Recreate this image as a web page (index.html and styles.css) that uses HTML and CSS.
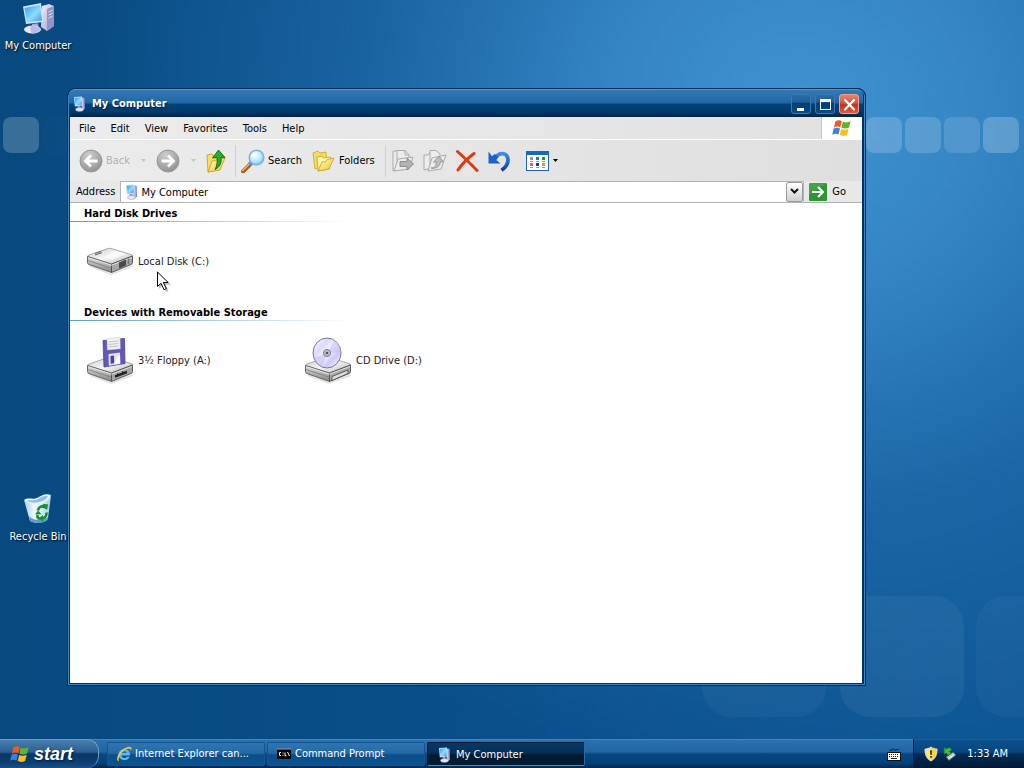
FILE: index.html
```html
<!DOCTYPE html>
<html lang="en">
<head>
  <meta charset="UTF-8" />
  <meta name="viewport" content="width=device-width, initial-scale=1.0"/>
  <title>My Computer</title>
  <link rel="stylesheet" href="styles.css">
</head>
<body>
  <!-- Shared icons -->
  <svg class="sprite" aria-hidden="true">
    <defs>
      <linearGradient id="gScreen" x1="0" y1="0" x2="1" y2="1">
        <stop offset="0" stop-color="#2f9df0"/><stop offset=".55" stop-color="#8fdcfb"/><stop offset="1" stop-color="#3d95e6"/>
      </linearGradient>
      <linearGradient id="gCase" x1="0" y1="0" x2="1" y2="1">
        <stop offset="0" stop-color="#f2f3fb"/><stop offset="1" stop-color="#9a9cc8"/>
      </linearGradient>
      <linearGradient id="gMetal" x1="0" y1="0" x2="1" y2="1">
        <stop offset="0" stop-color="#c9c9c9"/><stop offset=".5" stop-color="#f6f6f6"/><stop offset="1" stop-color="#b5b5b5"/>
      </linearGradient>
      <linearGradient id="gSide" x1="0" y1="0" x2="0" y2="1">
        <stop offset="0" stop-color="#dcdcdc"/><stop offset="1" stop-color="#868686"/>
      </linearGradient>
      <linearGradient id="gFolder" x1="0" y1="0" x2="1" y2="1">
        <stop offset="0" stop-color="#fffbb8"/><stop offset="1" stop-color="#f0c534"/>
      </linearGradient>
      <radialGradient id="gNav" cx=".4" cy=".25" r=".8">
        <stop offset="0" stop-color="#cfcfcf"/><stop offset=".6" stop-color="#a9a9a9"/><stop offset="1" stop-color="#8e8e8e"/>
      </radialGradient>
      <radialGradient id="gLens" cx=".4" cy=".35" r=".7">
        <stop offset="0" stop-color="#ffffff"/><stop offset=".6" stop-color="#b7e8fc"/><stop offset="1" stop-color="#6fc0ee"/>
      </radialGradient>
      <linearGradient id="gDisc" x1="0" y1="0" x2="1" y2="1">
        <stop offset="0" stop-color="#ffffff"/><stop offset=".3" stop-color="#dcd9fa"/><stop offset=".5" stop-color="#f8f8ff"/><stop offset=".7" stop-color="#cdc8f6"/><stop offset="1" stop-color="#ffffff"/>
      </linearGradient>
      <linearGradient id="gUndo" x1="0" y1="0" x2="0" y2="1">
        <stop offset="0" stop-color="#3a8fe8"/><stop offset="1" stop-color="#0c3fae"/>
      </linearGradient>
      <linearGradient id="gBin" x1="0" y1="0" x2="1" y2="0">
        <stop offset="0" stop-color="#9fd0f4"/><stop offset=".4" stop-color="#f2fbff"/><stop offset="1" stop-color="#a6d0f0"/>
      </linearGradient>
    </defs>

    <symbol id="flag" viewBox="0 0 20 18">
      <path d="M3.400 2.200C5.600.8 7.800.9 9.800 2L8.300 8.300C6.300 7.300 4.200 7.300 1.900 8.500z" fill="#ee5a24"/>
      <path d="M10.800 2.500c2.400 1.200 4.700 1.200 7.800-.2L17 8.500c-2.500 1.300-5 1.300-7.500.3z" fill="#62b42c"/>
      <path d="M1.700 9.600c2.300-1.200 4.300-1.200 6.300-.2L6.500 15.600C4.400 14.500 2.400 14.600.2 15.800z" fill="#3f7fe0"/>
      <path d="M9.200 9.900c2.500 1.100 5 1 7.500-.2l-1.600 6.200c-2.600 1.400-5 1.300-7.400.2z" fill="#fbc01d"/>
    </symbol>

    <symbol id="pc" viewBox="0 0 16 16">
      <path d="M9.500 1.500l3.200.3.300 11L9.500 15z" fill="#7f86c8"/>
      <path d="M10 2l1.500.2.200 11L10 14z" fill="#bcc0e8"/>
      <path d="M2 1L10 .5l.6 9-7.800 1z" fill="#c9e2fa"/>
      <path d="M2.700 1.700l6.700-.4.500 7.400-6.500.8z" fill="url(#gScreen)"/>
      <path d="M5.500 10l3-.3.300 2.500-3 .3z" fill="#8b99d0"/>
      <ellipse cx="7.500" cy="13.500" rx="4" ry="1.900" fill="#e6e6fa" stroke="#8a8cc4" stroke-width=".5"/>
    </symbol>

    <symbol id="drive" viewBox="0 0 48 28">
      <path d="M4 17l21 9.500 22-8.500v2L25 28 4 20z" fill="#000" opacity=".12"/>
      <path d="M1.500 9.500Q1.500 8.500 3 8L22 1.500q1.500-.5 3 0L45 7.500q1.500.6 1.500 1.500L25.500 17z" fill="url(#gMetal)" stroke="#888" stroke-width=".7"/>
      <path d="M1.500 9.500l24 7.500v8.500L3 17.500q-1.500-.6-1.500-2z" fill="url(#gSide)" stroke="#5a5a5a" stroke-width=".9"/>
      <path d="M25.500 17l21-8v6.500q0 1.500-1.500 2L25.500 25.500z" fill="#a6a6a6" stroke="#4c4c4c" stroke-width=".9"/>
      <path d="M2.500 10.800l23 7.400 20.500-7.700" fill="none" stroke="#eee" stroke-width=".8"/>
      <path d="M2 13.500l23.500 7.800" fill="none" stroke="#777" stroke-width=".7"/>
    </symbol>
  </svg>

  <main class="desktop">
    <svg class="wallpaper" viewBox="0 0 1024 739" preserveAspectRatio="xMaxYMin slice" aria-hidden="true">
      <g fill="#fff">
        <rect x="3" y="117" width="36" height="36" rx="8" opacity=".2"/>
        <rect x="42" y="117" width="36" height="36" rx="8" opacity=".01"/>
        <rect x="866" y="117" width="36" height="36" rx="8" opacity=".19"/>
        <rect x="905" y="117" width="36" height="36" rx="8" opacity=".17"/>
        <rect x="944" y="117" width="36" height="36" rx="8" opacity=".13"/>
        <rect x="983" y="117" width="36" height="36" rx="8" opacity=".21"/>
        <rect x="702" y="596" width="124" height="121" rx="30" opacity=".04"/>
        <rect x="840" y="596" width="124" height="121" rx="30" opacity=".05"/>
        <rect x="976" y="596" width="124" height="121" rx="30" opacity=".03"/>
      </g>
    </svg>

    <a class="shortcut shortcut-computer" href="#computer">
      <svg width="34" height="34" viewBox="0 0 34 34">
        <path d="M21 4l7-2 5 2v20l-7 5-6-4z" fill="url(#gCase)"/>
        <path d="M26 7l7-3v20l-7 5z" fill="#9294c6"/>
        <path d="M27.500 10l4-1.800M27.500 13l4-1.800M27.500 16l4-1.800" stroke="#dfe0f8" stroke-width="1"/>
        <path d="M2 4.500L20 1l2.500 19L5 22z" fill="#cfe3f8"/>
        <path d="M3.500 6L19 3l2 15.500L6 20.300z" fill="url(#gScreen)"/>
        <path d="M11 22l6-.7 1 6-6 .7z" fill="#a7a9d6"/>
        <ellipse cx="11.500" cy="27.500" rx="8.500" ry="4" fill="#e6e7fa"/>
        <path d="M9 24.500c4-1.500 9 0 10.500 2.500-1 3-5 4.500-9 4.500" fill="#b9bbe2"/>
      </svg>
      <span>My Computer</span>
    </a>

    <a class="shortcut shortcut-bin" href="#bin">
      <svg width="34" height="34" viewBox="0 0 34 34">
        <path d="M3 7l9 4 7-1 11-7-3 22c-2 5-13 6-18 3z" fill="url(#gBin)"/>
        <path d="M3 7c4-3 9 0 13-2s8-5 14-3c-2 5-6 8-12 9-5 1-11 0-15-4z" fill="#e9f6ff"/>
        <path d="M6 8c4-1.500 8 0 11-2s6-3.500 10-2.700C25 7 22 8.500 17.500 9.300 13 10 9 9.800 6 8z" fill="#8fc0e6"/>
        <path d="M8 23c4 5 14 5 19.300 1l-.5 2.500c-3 4-13 4.500-17.800 1.500z" fill="#5f9ad4"/>
        <g fill="none" stroke="#179027" stroke-width="2.600">
          <path d="M17 17.500c.5-3.500 3.500-5 6.500-3.500"/>
          <path d="M25.500 19.500c.3 3-1.500 5.500-4.500 6"/>
          <path d="M19 26c-2-.6-3-2-2.500-4"/>
        </g>
        <path d="M22 11l5 .3-.8 5.500-5-2.500zM22 22v6.500l-4.500-3zM14 21.500l3-4 3.500 3.700z" fill="#179027"/>
      </svg>
      <span>Recycle Bin</span>
    </a>

    <section class="window" id="computer">
      <header class="titlebar">
        <svg width="16" height="16"><use href="#pc"/></svg>
        <h1>My Computer</h1>
        <div class="window-buttons">
          <button class="win-btn" aria-label="Minimize"><svg width="17" height="17"><path d="M4 12h7v3H4z" fill="#fff"/></svg></button>
          <button class="win-btn" aria-label="Maximize"><svg width="17" height="17"><path d="M3 3h11v11H3zM4 6v7h9V6z" fill="#fff" fill-rule="evenodd"/></svg></button>
          <button class="win-btn close" aria-label="Close"><svg width="17" height="17"><path d="M4 4l9 9.500M13 4l-9 9.500" stroke="#fff" stroke-width="2.200" stroke-linecap="round"/></svg></button>
        </div>
      </header>

      <nav class="menubar">
        <button>File</button>
        <button>Edit</button>
        <button>View</button>
        <button>Favorites</button>
        <button>Tools</button>
        <button>Help</button>
        <div class="throbber"><svg width="20" height="18"><use href="#flag"/></svg></div>
      </nav>

      <div class="toolbar">
        <button class="tool back" disabled>
          <svg width="24" height="24" viewBox="0 0 24 24"><circle cx="12" cy="12" r="11" fill="url(#gNav)" stroke="#999"/><path d="M18.500 12H7M12 6.500L6.500 12l5.500 5.500" fill="none" stroke="#fff" stroke-width="2.800"/></svg>
          <span>Back</span>
        </button>
        <button class="drop" disabled aria-label="Back history"><svg width="5" height="3"><path d="M0 0h5L2.500 3z" fill="#c4c4c4"/></svg></button>
        <button class="tool" disabled aria-label="Forward">
          <svg width="24" height="24" viewBox="0 0 24 24"><circle cx="12" cy="12" r="11" fill="url(#gNav)" stroke="#999"/><path d="M5.500 12H17M12 6.500l5.500 5.500-5.500 5.500" fill="none" stroke="#fff" stroke-width="2.800"/></svg>
        </button>
        <button class="drop" disabled aria-label="Forward history"><svg width="5" height="3"><path d="M0 0h5L2.500 3z" fill="#c4c4c4"/></svg></button>
        <button class="tool" aria-label="Up">
          <svg width="24" height="24" viewBox="0 0 24 24">
            <path d="M1 6l5-1 1.500 2 6-1L12 21 2 23z" fill="#f8df68" stroke="#c39a1d" stroke-width=".8"/>
            <path d="M2 23l4-11 13-3-5 12z" fill="url(#gFolder)" stroke="#c39a1d" stroke-width=".8"/>
            <path d="M12.500 1L19 8.500l-4-.3c.8 5.500-.8 9.500-6 12.300 2-3.500 2.500-7 2-12L6.500 9z" fill="#27ad2c" stroke="#0b6a14" stroke-width=".9"/>
          </svg>
        </button>
        <span class="separator"></span>
        <button class="tool search">
          <svg width="24" height="24" viewBox="0 0 24 24">
            <path d="M2 22.500l8.500-8.500" stroke="#a85d1c" stroke-width="4" stroke-linecap="round"/>
            <path d="M1.800 21.500l7.500-7.500" stroke="#f5b26a" stroke-width="1.600" stroke-linecap="round"/>
            <path d="M8.500 15.500l2.500-2.500" stroke="#6d8fc4" stroke-width="4"/>
            <circle cx="15.500" cy="8.500" r="7.300" fill="url(#gLens)" stroke="#7fb0e0" stroke-width="1.500"/>
            <path d="M11.500 8c.4-2.500 2-3.600 4-3.800" stroke="#fff" stroke-width="1.500" fill="none"/>
          </svg>
          <span>Search</span>
        </button>
        <button class="tool folders">
          <svg width="24" height="24" viewBox="0 0 24 24">
            <path d="M1 4l5-2 2 2 6-1 1 12-12 5z" fill="#f6db62" stroke="#c9a227" stroke-width=".8"/>
            <path d="M5 8l5-1 1.500 2 7-1-1 12L6 22z" fill="#fff6a8" stroke="#c9a227" stroke-width=".8"/>
            <path d="M6 22l4-9 4-.5 1-2L22 9l-5 11z" fill="url(#gFolder)" stroke="#c9a227" stroke-width=".8"/>
          </svg>
          <span>Folders</span>
        </button>
        <span class="separator"></span>
        <button class="tool" disabled aria-label="Move to">
          <svg width="24" height="24" viewBox="0 0 24 24" fill="#ececec" stroke="#ababab">
            <path d="M2 2h4l1.500 2H10v16l-8 2z"/>
            <path d="M6 4V1.500h8L18 6v13l-12 1z"/>
            <path d="M14 1.500V6h4" fill="none"/>
            <path d="M3 22l4-12 15-2-4 12z"/>
            <path d="M9 12.500h7V9l6.500 6-6.500 6v-3.500H9z" fill="#b2b2b2" stroke="#8d8d8d"/>
          </svg>
        </button>
        <button class="tool" disabled aria-label="Copy to">
          <svg width="24" height="24" viewBox="0 0 24 24" fill="#ececec" stroke="#ababab">
            <path d="M1 6h4l1.500-2H9v15l-8 2z"/>
            <path d="M7 4V1.500h6L17 5v12l-10 3z"/>
            <path d="M5 22L9 9l14-3-5 14z"/>
            <path d="M8 19c4 0 5-2 5.500-6l-3 .2 5.500-6 4.500 5.600-3-.1C17 17 14 20 8 19z" fill="#bdbdbd" stroke="#999"/>
          </svg>
        </button>
        <button class="tool" aria-label="Delete">
          <svg width="24" height="24" viewBox="0 0 24 24"><path d="M2.500 2.500C8 7.500 15 14 22 21.500M19 4.500C13 9 7 15 3 21" fill="none" stroke="#de3a12" stroke-width="3" stroke-linecap="round"/></svg>
        </button>
        <button class="tool" aria-label="Undo">
          <svg width="24" height="24" viewBox="0 0 24 24"><path d="M7.500 9.500C12 2.500 20.500 3 21 10.500c.2 4.500-2.500 8-6.500 10.700" fill="none" stroke="url(#gUndo)" stroke-width="3.800"/><path d="M1.500 2.500v12h12l-4.200-3.500 2.200-3-4-3-2.500 2.300z" fill="#1d62c8"/></svg>
        </button>
        <button class="tool views" aria-label="Views">
          <svg width="24" height="24" viewBox="0 0 24 24">
            <rect x=".5" y="3" width="22" height="18.500" fill="#fff" stroke="#2464b4"/><path d="M0 2h23v4H0z" fill="#1769c0"/>
            <path d="M4 8h3v3H4z" fill="#9a8fae"/><path d="M10 8h3v3h-3z" fill="#426ea8"/><path d="M16 8h3v3h-3z" fill="#189a38"/>
            <path d="M4 14h3v3H4z" fill="#df6371"/><path d="M10 14h3v3h-3z" fill="#183b8c"/><path d="M16 14h3v3h-3z" fill="#d99b23"/>
            <path d="M4 12.500h3M10 12.500h3M16 12.500h3M4 18.500h3M10 18.500h3M16 18.500h3" stroke="#999"/>
          </svg>
          <svg width="5" height="3"><path d="M0 0h5L2.500 3z"/></svg>
        </button>
      </div>

      <form class="addressbar" onsubmit="return false">
        <label for="address">Address</label>
        <div class="address-field">
          <svg width="16" height="16"><use href="#pc"/></svg>
          <input id="address" type="text" value="My Computer">
          <button type="button" class="address-drop" aria-label="Show addresses"><svg width="9" height="7"><path d="M1 1l3.500 3.500L8 1" fill="none" stroke="#111" stroke-width="2"/></svg></button>
        </div>
        <button class="go">
          <svg width="18" height="18" viewBox="0 0 18 18"><rect width="18" height="18" rx="1" fill="#2d9535"/><path d="M0 0h18L0 12z" fill="#fff" opacity=".12"/><path d="M3 9h10M9 4l5 5-5 5" fill="none" stroke="#fff" stroke-width="2"/></svg>
          <span>Go</span>
        </button>
      </form>

      <div class="content">
        <section class="group">
          <h2>Hard Disk Drives</h2>
          <div class="items">
            <a class="item" href="#c">
              <svg width="48" height="48" viewBox="0 0 48 48">
                <use href="#drive" y="10" width="48" height="28"/>
                <path d="M9 16.500l6-2M9 18l7-2.300" stroke="#666" stroke-width="1"/>
                <path d="M19 20l9-6.500 12 3.500-14 6z" fill="#fff" opacity=".6"/>
                <path d="M33 25.500l7-3v6l-7 3z" fill="#4a4a4a"/>
                <path d="M42.500 21.500v5.500" stroke="#777" stroke-width="1.500"/>
              </svg>
              <span>Local Disk (C:)</span>
            </a>
          </div>
        </section>
        <section class="group">
          <h2>Devices with Removable Storage</h2>
          <div class="items">
            <a class="item" href="#a">
              <svg width="48" height="48" viewBox="0 0 48 48">
                <use href="#drive" y="20" width="48" height="28"/>
                <path d="M29 40l12-4.500M31 38l3 1.500M36 35.500l3 2M29 41l12-4.500" stroke="#222" stroke-width="1.500"/>
                <path d="M17 4.500l21.500-2 .5 25L18 31z" fill="#6259b4" stroke="#4a4296" stroke-width=".8"/>
                <path d="M21 2.500l13-1.200.3 11.500L21.400 14z" fill="#f3f3f3" stroke="#c9c9d6" stroke-width=".5"/>
                <path d="M22.500 6l10-1M22.500 8.500l10-1M22.500 11l10-1" stroke="#b5b5b5" stroke-width=".8"/>
                <path d="M22.500 18l11.500-1.500.3 11.500-11.500 1.800z" fill="#e2e2f4"/>
                <path d="M24.500 20l3.500-.5.200 7.700-3.500.5z" fill="#4b4299"/>
                <path d="M28 28l5-9 1-.2.200 8.500z" fill="#fff"/>
              </svg>
              <span>3½ Floppy (A:)</span>
            </a>
            <a class="item" href="#d">
              <svg width="48" height="48" viewBox="0 0 48 48">
                <use href="#drive" y="20" width="48" height="28"/>
                <path d="M28 40.500l16-6.500v3.500L28 44.500z" fill="#ddd" stroke="#444" stroke-width=".8"/>
                <ellipse cx="23" cy="17" rx="14" ry="15" fill="url(#gDisc)" stroke="#777694" stroke-width="1"/>
                <path d="M23 17L30 4.500c5 2.500 7 7 6.500 12z" fill="#c5bff7" opacity=".6"/>
                <path d="M23 17L10 22c2 5 4.500 7.500 8 8.500z" fill="#b7b3ea" opacity=".5"/>
                <circle cx="23" cy="17" r="3.500" fill="#c4c4d0" stroke="#77778c"/>
                <circle cx="23" cy="17" r="1.300" fill="#555"/>
              </svg>
              <span>CD Drive (D:)</span>
            </a>
          </div>
        </section>
      </div>
    </section>

    <svg class="cursor" width="16" height="22" viewBox="0 0 16 22" aria-hidden="true">
      <path d="M3 3v15l4-3.500 3 6.500 2.500-1-2.800-6.300H15z" fill="#000" opacity=".25"/>
      <path d="M1.500 1v14.500l3.500-3.200 3 6.400 2.300-1-2.900-6.200h4.800z" fill="#fff" stroke="#000"/>
    </svg>
  </main>

  <footer class="taskbar">
    <button class="start">
      <svg width="20" height="18"><use href="#flag"/></svg>
      <span>start</span>
    </button>
    <div class="tasks">
      <button class="task">
        <svg width="16" height="16" viewBox="0 0 16 16">
          <path d="M14 9.500H5.500c.2 2.800 4.200 3.300 5.400 1.200h2.800C12 15.800 2.800 15.300 2.600 8.500 2.500 1.500 14.500 1 14 9.500zM5.600 7h5.300C10.500 4.200 6 4.200 5.600 7z" fill="#59b8f5" fill-rule="evenodd"/>
          <path d="M3 15.200C-2.500 14 5 1.200 13.500.8c2.800.1 2.200 2.500 1.200 4C15 2.500 13.500 1.800 11 3 6 5 1.500 11.500 3 15.200z" fill="#f6c83b"/>
        </svg>
        <span>Internet Explorer can...</span>
      </button>
      <button class="task">
        <svg width="16" height="16" viewBox="0 0 16 16">
          <rect x="1" y="3" width="14" height="10" fill="#050505"/><path d="M1 3h14" stroke="#8d9ab0"/>
          <path d="M5 6.500H3.500v3H5M7 6.500v1M7 8.800v1M9 6.500v3.300h1.500M11.500 6l2 4" stroke="#fff" fill="none"/>
        </svg>
        <span>Command Prompt</span>
      </button>
      <button class="task active">
        <svg width="16" height="16"><use href="#pc"/></svg>
        <span>My Computer</span>
      </button>
    </div>
    <button class="keyboard" aria-label="Language bar">
      <svg width="14" height="14" viewBox="0 0 14 14">
        <path d="M3 4c0-3 2 0 3-1.500S8 4 9 3s2 0 3-1" fill="none" stroke="#06192f"/>
        <rect x=".5" y="5.500" width="13" height="8" fill="#fff" stroke="#111"/>
        <path d="M2 7.500h10M2 9.500h10" stroke="#222" stroke-dasharray="1 1"/><path d="M4 11.500h6" stroke="#222"/>
      </svg>
    </button>
    <div class="tray">
      <svg width="14" height="16" viewBox="0 0 14 16">
        <path d="M7 1c2 1.500 4 2 6 2 0 6-1.500 9.500-6 12-4.500-2.500-6-6-6-12 2 0 4-.5 6-2z" fill="#fbd43a" stroke="#d9e3ee"/>
        <path d="M7 1.500V14.500c-4-2.500-5.300-6-5.400-11z" fill="#fff" opacity=".35"/>
        <path d="M6 4.500h2L7.600 9H6.400zM6.200 10h1.600v1.700H6.200z" fill="#222"/>
      </svg>
      <svg width="14" height="16" viewBox="0 0 14 16">
        <path d="M3 11l7-5 3 3-7 5.500z" fill="#bcc4c9" stroke="#4b555b" stroke-width=".8"/>
        <path d="M5.500 12.500l5-3.500" stroke="#fff"/>
        <path d="M1 1l2 2 4-1.500L8.500 4l-2 1.500 1.500 2-3 2L3.500 7 1.300 8z" fill="#3fbf45" stroke="#167a22" stroke-width=".7"/>
      </svg>
      <time>1:33 AM</time>
    </div>
  </footer>
</body>
</html>
```
FILE: styles.css
```css
* {
  margin: 0;
  padding: 0;
  box-sizing: border-box;
}

body {
  font-family: "DejaVu Sans Condensed", "DejaVu Sans", Tahoma, sans-serif;
  font-size: 11px;
  line-height: 14px;
  color: #000;
  height: 100vh;
  display: flex;
  flex-direction: column;
  overflow: hidden;
}

svg {
  display: block;
  flex-shrink: 0;
}

button {
  font: inherit;
  color: inherit;
  background: none;
  border: none;
  display: flex;
  align-items: center;
}

a {
  color: inherit;
  text-decoration: none;
}

.sprite {
  position: absolute;
  width: 0;
  height: 0;
}

/* Desktop */
.desktop {
  flex: 1;
  position: relative;
  overflow: hidden;
  background:
    radial-gradient(ellipse 720px 680px at 800px 110px, #3f92cf 0%, rgba(58, 139, 203, 0.9) 25%, rgba(36, 114, 178, 0.6) 60%, rgba(12, 82, 142, 0) 100%),
    linear-gradient(90deg, #084a80 0%, #0a4f8a 50%, #0c5594 100%);
}

.wallpaper {
  width: 100%;
  height: 100%;
}

.shortcut {
  position: absolute;
  left: 0;
  width: 76px;
  display: flex;
  flex-direction: column;
  align-items: center;
  gap: 3px;
  color: #fff;
  white-space: nowrap;
  text-shadow: 1px 1px 2px #000;
}

.shortcut-computer {
  top: 2px;
}

.shortcut-bin {
  top: 493px;
}

/* Window */
.window {
  position: absolute;
  top: 88px;
  right: 158px;
  bottom: 53px;
  left: 67px;
  display: flex;
  flex-direction: column;
  border: 1px solid #062d57;
  border-radius: 8px 8px 0 0;
  padding: 0 2px 1px 1px;
  background: #04315f;
  box-shadow: inset 0 0 0 1px #4386bd;
}

.titlebar {
  height: 28px;
  display: flex;
  align-items: center;
  gap: 4px;
  padding: 1px 4px 0 3px;
  border-top: 1px solid #5294c8;
  border-radius: 7px 7px 0 0;
  background: linear-gradient(#3179b5 0, #2267a5 13px, #004377 14px, #013a6c 22px, #022343 100%);
  color: #fff;
}

.titlebar h1 {
  flex: 1;
  font-size: 11px;
  text-shadow: 1px 1px 1px #03244a;
}

.window-buttons {
  display: flex;
  gap: 4px;
}

.win-btn {
  width: 20px;
  height: 20px;
  justify-content: center;
  border: 1px solid #3e78ad;
  border-radius: 3px;
  background: linear-gradient(#2b6ca8 0, #1f5f9c 40%, #003f75 45%, #0b4a83 100%);
}

.win-btn.close {
  border-color: #f0a090;
  background: linear-gradient(#e5826d 0, #d9543c 45%, #c72f17 55%, #dc5c40 100%);
}

.menubar {
  height: 23px;
  margin: 0 1px;
  display: flex;
  background: linear-gradient(90deg, #ececec, #e1e1e1);
  border-bottom: 1px solid #fff;
}

.menubar button {
  padding: 1px 7px 0 8px;
}

.menubar button:first-child {
  margin-left: 1px;
}

.throbber {
  width: 41px;
  margin-left: auto;
  display: flex;
  align-items: center;
  justify-content: center;
  background: #fff;
  border-left: 1px solid #c8c8c8;
}

.toolbar {
  height: 41px;
  margin: 0 1px;
  padding: 0 8px;
  display: flex;
  align-items: center;
  background: linear-gradient(90deg, #ececec, #dfdfdf);
}

.tool {
  gap: 3px;
  padding: 0 4px;
}

.tool:disabled {
  color: #b0b0b0;
}

.back {
  padding-left: 1px;
}

.drop {
  padding: 0 6px 0 7px;
}

.separator {
  width: 1px;
  height: 32px;
  margin: 0 1px;
  background: #cfcfcf;
}

.folders {
  margin: 0 5px 0 2px;
}

.views {
  margin-left: 7px;
}

.addressbar {
  height: 22px;
  margin: 0 1px;
  padding-left: 6px;
  display: flex;
  align-items: center;
  gap: 5px;
  background: #e8e8e8;
  border-bottom: 1px solid #aeb2b5;
}

.address-field {
  flex: 1;
  height: 22px;
  padding-left: 3px;
  display: flex;
  align-items: center;
  background: #fff;
  border: 1px solid #b3b3b3;
}

.address-field input {
  flex: 1;
  min-width: 0;
  font: inherit;
  padding: 2px 0 0 1px;
  background: none;
  border: none;
  outline: none;
}

.address-drop {
  width: 17px;
  height: 20px;
  justify-content: center;
  border: 1px solid #9c9c9c;
  border-radius: 2px;
  background: linear-gradient(#fff, #cfcfcf);
}

.go {
  gap: 5px;
  padding-right: 16px;
}

.content {
  flex: 1;
  margin: 0 1px 1px;
  background: #fff;
}

.group {
  height: 99px;
}

.group h2 {
  height: 19px;
  padding: 4px 14px 0;
  font-size: 11px;
  background: linear-gradient(90deg, #5c9cc4, #fff 280px) bottom / 100% 1px no-repeat;
}

.items {
  display: flex;
  padding: 15px 16px 0;
}

.item {
  width: 218px;
  display: flex;
  align-items: center;
  gap: 4px;
  color: #222;
}

.item span {
  padding-top: 2px;
}

.cursor {
  position: absolute;
  left: 156px;
  top: 271px;
}

/* Taskbar */
.taskbar {
  height: 29px;
  display: flex;
  align-items: stretch;
  color: #fff;
  background: linear-gradient(#5c9acc 0, #2c70ae 1px, #2265a3 13px, #064881 15px, #044178 24px, #02264b 100%);
}

.start {
  width: 99px;
  padding-left: 10px;
  gap: 4px;
  border: 1px solid #6f9cc4;
  border-width: 1px 1px 0 0;
  border-radius: 0 12px 12px 0;
  background: linear-gradient(#4c7fae 0, #2a5f94 12px, #0b3766 14px, #0c3d70 22px, #174f86 100%);
  font-family: "Liberation Sans", Arial, sans-serif;
  font-size: 18px;
  font-weight: bold;
  font-style: italic;
  line-height: 20px;
  text-shadow: 1px 1px 2px #021c3a;
}

.tasks {
  flex: 1;
  display: flex;
  gap: 2px;
  padding: 3px 0 2px 8px;
}

.task {
  width: 158px;
  gap: 3px;
  padding: 0 8px;
  border: 1px solid #145491;
  border-radius: 2px;
  background: linear-gradient(#3075b3 0, #2568a6 10px, #0b4e88 12px, #0b5490 100%);
  white-space: nowrap;
}

.task.active {
  padding: 1px 8px 0 9px;
  border-color: #021830 #2a6aa5 #4f8cbd #021830;
  background: linear-gradient(#053968 0, #042f57 10px, #021a30 12px, #031d33 100%);
}

.keyboard {
  padding: 0 12px;
}

.tray {
  display: flex;
  align-items: center;
  gap: 5px;
  padding: 0 16px 0 10px;
  border-left: 1px solid #021c3a;
  background: linear-gradient(#2a6ca8 0, #0c508c 1px, #084580 13px, #022d58 15px, #021a33 100%);
}

.tray time {
  margin-left: 5px;
}
```
